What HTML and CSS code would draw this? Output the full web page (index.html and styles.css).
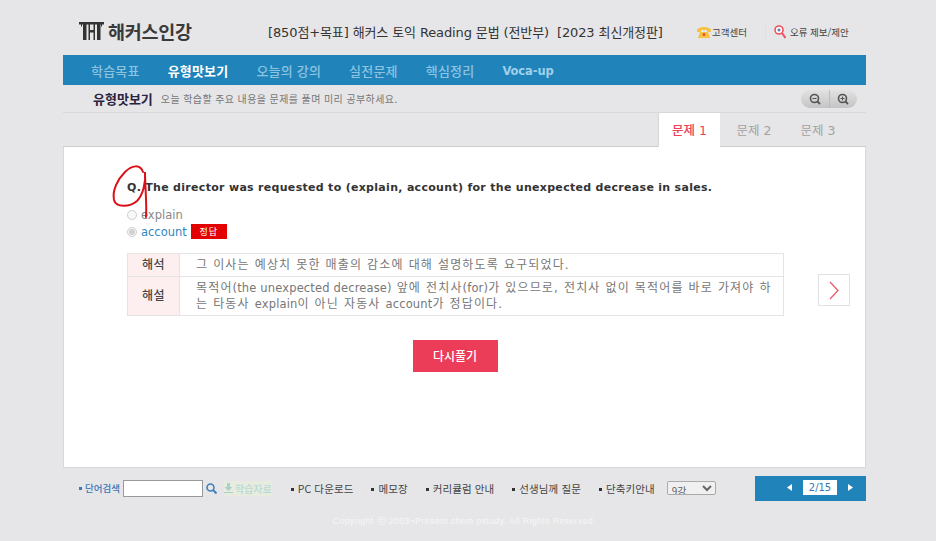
FILE: index.html
```html
<!DOCTYPE html>
<html lang="ko">
<head>
<meta charset="utf-8">
<title>해커스인강</title>
<link rel="stylesheet" href="styles.css">
</head>
<body>
<div class="page">
  <header class="top">
    <div class="logo">
      <svg class="logo-mark" width="25" height="18" viewBox="0 0 25 18"><path d="M0 0h25v2.500H0zM2 2.500h1v2H2zM4 2.500h3.500V18H4zM9.500 2.500H11V18H9.500zM11 8h3.500v2.500H11zM14.500 2.500H16V18h-1.500zM18 2.500h3.500V18H18zM22 2.500h1v2h-1z" fill="#333"/></svg>
      <span class="logo-text">해커스인강</span>
    </div>
    <h1 class="course">[850점+목표] 해커스 토익 Reading 문법 (전반부) &nbsp;[2023 최신개정판]</h1>
    <div class="top-links">
      <a class="top-link service">
        <svg width="14" height="12" viewBox="0 0 14 12"><path d="M0 4C1 0 13 0 14 4v2h-4V4H4v2H0z" fill="#f5c242"/><path d="M3 6h8l2 6H1z" fill="#f5c242"/><circle cx="7" cy="8.500" r="1.500" fill="#e8503a"/></svg>
        고객센터
      </a>
      <a class="top-link report">
        <svg width="12" height="14" viewBox="0 0 12 14"><circle cx="5" cy="5" r="4" fill="#fff" stroke="#ee4f5e" stroke-width="1.600"/><path d="M8 8l3.500 5" stroke="#ee4f5e" stroke-width="2"/><path d="M3.500 5h3M5 3.500v3" stroke="#26527f"/></svg>
        오류 제보/제안
      </a>
    </div>
  </header>
  <nav class="nav">
    <a>학습목표</a>
    <a class="on">유형맛보기</a>
    <a>오늘의 강의</a>
    <a>실전문제</a>
    <a>핵심정리</a>
    <a class="voca">Voca-up</a>
  </nav>
  <div class="sub">
    <strong class="sub-title">유형맛보기</strong>
    <span class="sub-desc">오늘 학습할 주요 내용을 문제를 풀며 미리 공부하세요.</span>
    <div class="zoom">
      <span class="zoom-btn"><svg width="12" height="12" viewBox="0 0 12 12"><circle cx="5.500" cy="5.500" r="4" fill="none" stroke="#555" stroke-width="1.600"/><path d="M8.500 8.500l2.500 2.500" stroke="#555" stroke-width="1.800"/><path d="M3.500 5.500h4" stroke="#555"/></svg></span>
      <span class="zoom-btn"><svg width="12" height="12" viewBox="0 0 12 12"><circle cx="5.500" cy="5.500" r="4" fill="none" stroke="#555" stroke-width="1.600"/><path d="M8.500 8.500l2.500 2.500" stroke="#555" stroke-width="1.800"/><path d="M3.500 5.500h4M5.500 3.500v4" stroke="#555"/></svg></span>
    </div>
  </div>
  <div class="tabs">
    <a class="tab active">문제 1</a>
    <a class="tab">문제 2</a>
    <a class="tab">문제 3</a>
  </div>
  <main class="panel">
    <svg class="scribble" width="40" height="60" viewBox="0 0 40 60"><path d="M33 12C30 4 22 5 15 12C8 19 2 30 4 40C6 48 20 47 27 41C33 35 36 22 35 12C35 25 37 45 36 57" fill="none" stroke="#dc1018" stroke-width="2" stroke-linecap="round"/></svg>
    <div class="question-row">
      <div class="question-body">
        <p class="question"><b class="q-mark">Q.</b> The director was requested to (explain, account) for the unexpected decrease in sales.</p>
        <label class="option"><input type="radio" name="a" disabled><span>explain</span></label>
        <label class="option answer"><input type="radio" name="a" checked disabled><span>account</span><em class="badge">정답</em></label>
        <table class="explain">
          <tr><th>해석</th><td>그 이사는 예상치 못한 매출의 감소에 대해 설명하도록 요구되었다.</td></tr>
          <tr><th>해설</th><td>
            <span class="line"><span>목적어</span><span class="en">(the unexpected decrease)</span><span> 앞에 전치사</span><span class="en">(for)</span><span>가 있으므로, 전치사 없이 목적어를 바로 가져야 하</span></span>
            <span class="line"><span>는 타동사 </span><span class="en">explain</span><span>이 아닌 자동사 </span><span class="en">account</span><span>가 정답이다.</span></span>
          </td></tr>
        </table>
      </div>
      <a class="next"><svg width="10" height="19" viewBox="0 0 10 19"><path d="M1 1l8 8.500-8 8.500" fill="none" stroke="#ee5565" stroke-width="1.200"/></svg></a>
    </div>
    <div class="retry-wrap"><a class="retry">다시풀기</a></div>
  </main>
  <footer class="bottom">
    <div class="tools">
      <span class="dict">단어검색</span>
      <input class="dict-input" type="text">
      <svg class="search-icon" width="11" height="11" viewBox="0 0 11 11"><circle cx="4.500" cy="4.500" r="3.500" fill="none" stroke="#3f7fc0" stroke-width="1.600"/><path d="M7 7l3.500 3.500" stroke="#3f7fc0" stroke-width="2"/></svg>
      <span class="materials"><svg width="9" height="10" viewBox="0 0 9 10"><path d="M3 0h3v4h2.500L4.500 8 .5 4H3zM0 9h9v1H0z" fill="#a9cfcf"/></svg>학습자료</span>
      <a class="tool pc">PC 다운로드</a>
      <a class="tool">메모장</a>
      <a class="tool">커리큘럼 안내</a>
      <a class="tool">선생님께 질문</a>
      <a class="tool">단축키안내</a>
      <select class="lesson"><option>9강</option></select>
    </div>
    <div class="pager">
      <svg width="5" height="7" viewBox="0 0 5 7"><path d="M5 0v7L0 3.500z" fill="#fff"/></svg>
      <span class="page-num">2/15</span>
      <svg width="5" height="7" viewBox="0 0 5 7"><path d="M0 0v7l5-3.500z" fill="#fff"/></svg>
    </div>
  </footer>
  <p class="copy">Copyright ⓒ 2003~Present chem pstudy. All Rights Reserved.</p>
</div>
</body>
</html>
```
FILE: styles.css
```css
* { box-sizing: border-box; }
html, body { margin: 0; height: 100%; }
body {
  background: #e6e6e8;
  font-family: "DejaVu Sans", "Noto Sans CJK KR", sans-serif;
  color: #333;
  overflow: hidden;
}
.page { width: 803px; margin-left: 63px; position: relative; }
.top { height: 55px; display: flex; align-items: center; padding-top: 8px; }
.logo { display: flex; align-items: center; gap: 4px; width: 205px; padding-left: 16px; padding-bottom: 1px; }
.logo-text { font: 700 18.500px "Noto Sans CJK KR", sans-serif; color: #3a3a3a; letter-spacing: -.25px; }
.course { margin: 0; font: 400 13px "DejaVu Sans", "Noto Sans CJK KR", sans-serif; color: #333; width: 424px; white-space: nowrap; letter-spacing: -.12px; }
.top-links { display: flex; margin-left: 5px; gap: 18px; }
.top-link { display: flex; align-items: center; gap: 1px; font: 9.500px "Noto Sans CJK KR", sans-serif; color: #444; white-space: nowrap; }
.report { gap: 4px; padding-left: 8px; border-left: 1px solid #dedede; }
.nav { height: 30px; background: #2084bb; display: flex; align-items: center; padding-left: 28px; gap: 28px; font: 500 13px "Noto Sans CJK KR", sans-serif; letter-spacing: .2px; color: #8cc3e0; }
.nav a { white-space: nowrap; }
.nav .on { color: #fff; font-weight: 700; }
.nav .voca { font: 700 11.500px "DejaVu Sans", sans-serif; color: #9fd0ea; letter-spacing: -.1px; padding-top: 2px; }
.sub { height: 28px; display: flex; align-items: center; padding-left: 30px; border-bottom: 1px solid #d8d8d8; }
.sub-title { font: 700 13px "Noto Sans CJK KR", sans-serif; color: #2b2340; }
.sub-desc { font: 10px "Noto Sans CJK KR", sans-serif; color: #777; margin-left: 8px; letter-spacing: .4px; }
.zoom { margin-left: auto; margin-right: 9px; width: 56px; height: 18px; border-radius: 9px; background: linear-gradient(#e2e2e2, #c4c4c4); display: flex; }
.zoom-btn { flex: 1; display: flex; align-items: center; justify-content: center; }
.zoom-btn + .zoom-btn { border-left: 1px solid #bbb; }
.tabs { height: 34px; display: flex; justify-content: flex-end; padding-right: 16px; border-bottom: 1px solid #ccc; }
.tab { width: 64px; display: flex; align-items: center; justify-content: center; font: 12.500px "DejaVu Sans", "Noto Sans CJK KR", sans-serif; color: #a2a2a2; padding-bottom: 1px; }
.tab.active { width: 62px; background: #fff; color: #ec4059; font-weight: 500; height: 34px; margin-right: 2px; border-left: 1px solid #d8d8d8; }
.panel { height: 321px; background: #fff; border: 1px solid #d8d8d8; border-top: 0; position: relative; }
.scribble { position: absolute; left: 46px; top: 13px; pointer-events: none; z-index: 2; }
.question-row { display: flex; padding: 34px 15px 0 63px; }
.question-body { width: 657px; flex: none; }
.question { margin: 0 0 11px; font-size: 11px; font-weight: 700; line-height: 14px; color: #333; white-space: nowrap; letter-spacing: .3px; }
.q-mark { margin-right: 0; }
.option { display: flex; align-items: center; height: 17px; font-size: 11.500px; color: #888; }
.option input { margin: 0 4px 0 0; width: 10px; height: 10px; }
.answer { color: #2e87bf; }
.badge { margin-left: 4px; width: 36px; height: 15px; background: #e30000; color: #fff; font: 9px/15px "Noto Sans CJK KR", sans-serif; letter-spacing: 1px; text-align: center; }
.explain { margin-top: 13px; width: 100%; border-collapse: collapse; font-size: 12px; line-height: 16px; color: #777; letter-spacing: 1.150px; }
.explain .en { font-size: 11.500px; letter-spacing: .15px; }
.explain .line { display: block; white-space: nowrap; }
.explain th, .explain td { border: 1px solid #e4e4e4; font-weight: 400; }
.explain th { width: 52px; background: #fdeff0; color: #444; font-weight: 500; letter-spacing: .5px; }
.explain tr:first-child td { height: 23px; }
.explain td { padding: 3px 8px 3px 16px; }
.next { width: 32px; height: 32px; border: 1px solid #e2e2e2; margin: 93px 0 0 34px; display: flex; align-items: center; justify-content: center; flex: none; }
.retry-wrap { display: flex; justify-content: center; margin-top: 24px; padding-right: 19px; }
.retry { width: 85px; height: 32px; background: #ec3d58; color: #fff; font: 500 12px/32px "Noto Sans CJK KR", sans-serif; text-align: center; }
.bottom { height: 33px; display: flex; justify-content: space-between; align-items: flex-start; }
.tools { display: flex; align-items: center; height: 16px; margin-top: 12px; font: 10.500px "Noto Sans CJK KR", sans-serif; color: #444; padding-left: 16px; white-space: nowrap; }
.dict { color: #3a78b8; font-weight: 500; font-size: 9.500px; }
.dict::before { content: ""; display: inline-block; width: 3px; height: 3px; background: #3a78b8; margin-right: 3px; vertical-align: 2px; }
.dict-input { width: 80px; height: 17px; margin: 0 0 0 3px; padding: 0; border: 1px solid #999; background: #fff; }
.search-icon { margin-left: 3px; }
.materials { color: #b9d8d6; background: #e7ecdf; margin-left: 7px; display: flex; align-items: center; gap: 2px; font-weight: 500; font-size: 10px; }
.tool { margin-left: 18px; letter-spacing: .1px; }
.tool::before { content: ""; display: inline-block; width: 3px; height: 3px; background: #333; margin-right: 4px; vertical-align: 2px; }
.pc { margin-left: 19px; }
.lesson { margin-left: 12px; width: 49px; height: 14px; border: 1px solid #aaa; border-radius: 2px; font: 10px "Noto Sans CJK KR", sans-serif; color: #666; background: #f0f0f0; padding: 0; }
.pager { width: 111px; height: 25px; margin-top: 8px; background: #2084bb; display: flex; align-items: center; justify-content: flex-end; padding: 0 13px 2px 0; gap: 11px; flex: none; }
.page-num { width: 34px; height: 15px; background: #fff; color: #3878b4; font-size: 10px; line-height: 15px; text-align: center; }
.copy { margin: 15px 0 0; text-align: center; font: 8.500px "Liberation Sans", sans-serif; color: #f6f6f6; letter-spacing: .5px; }
```
